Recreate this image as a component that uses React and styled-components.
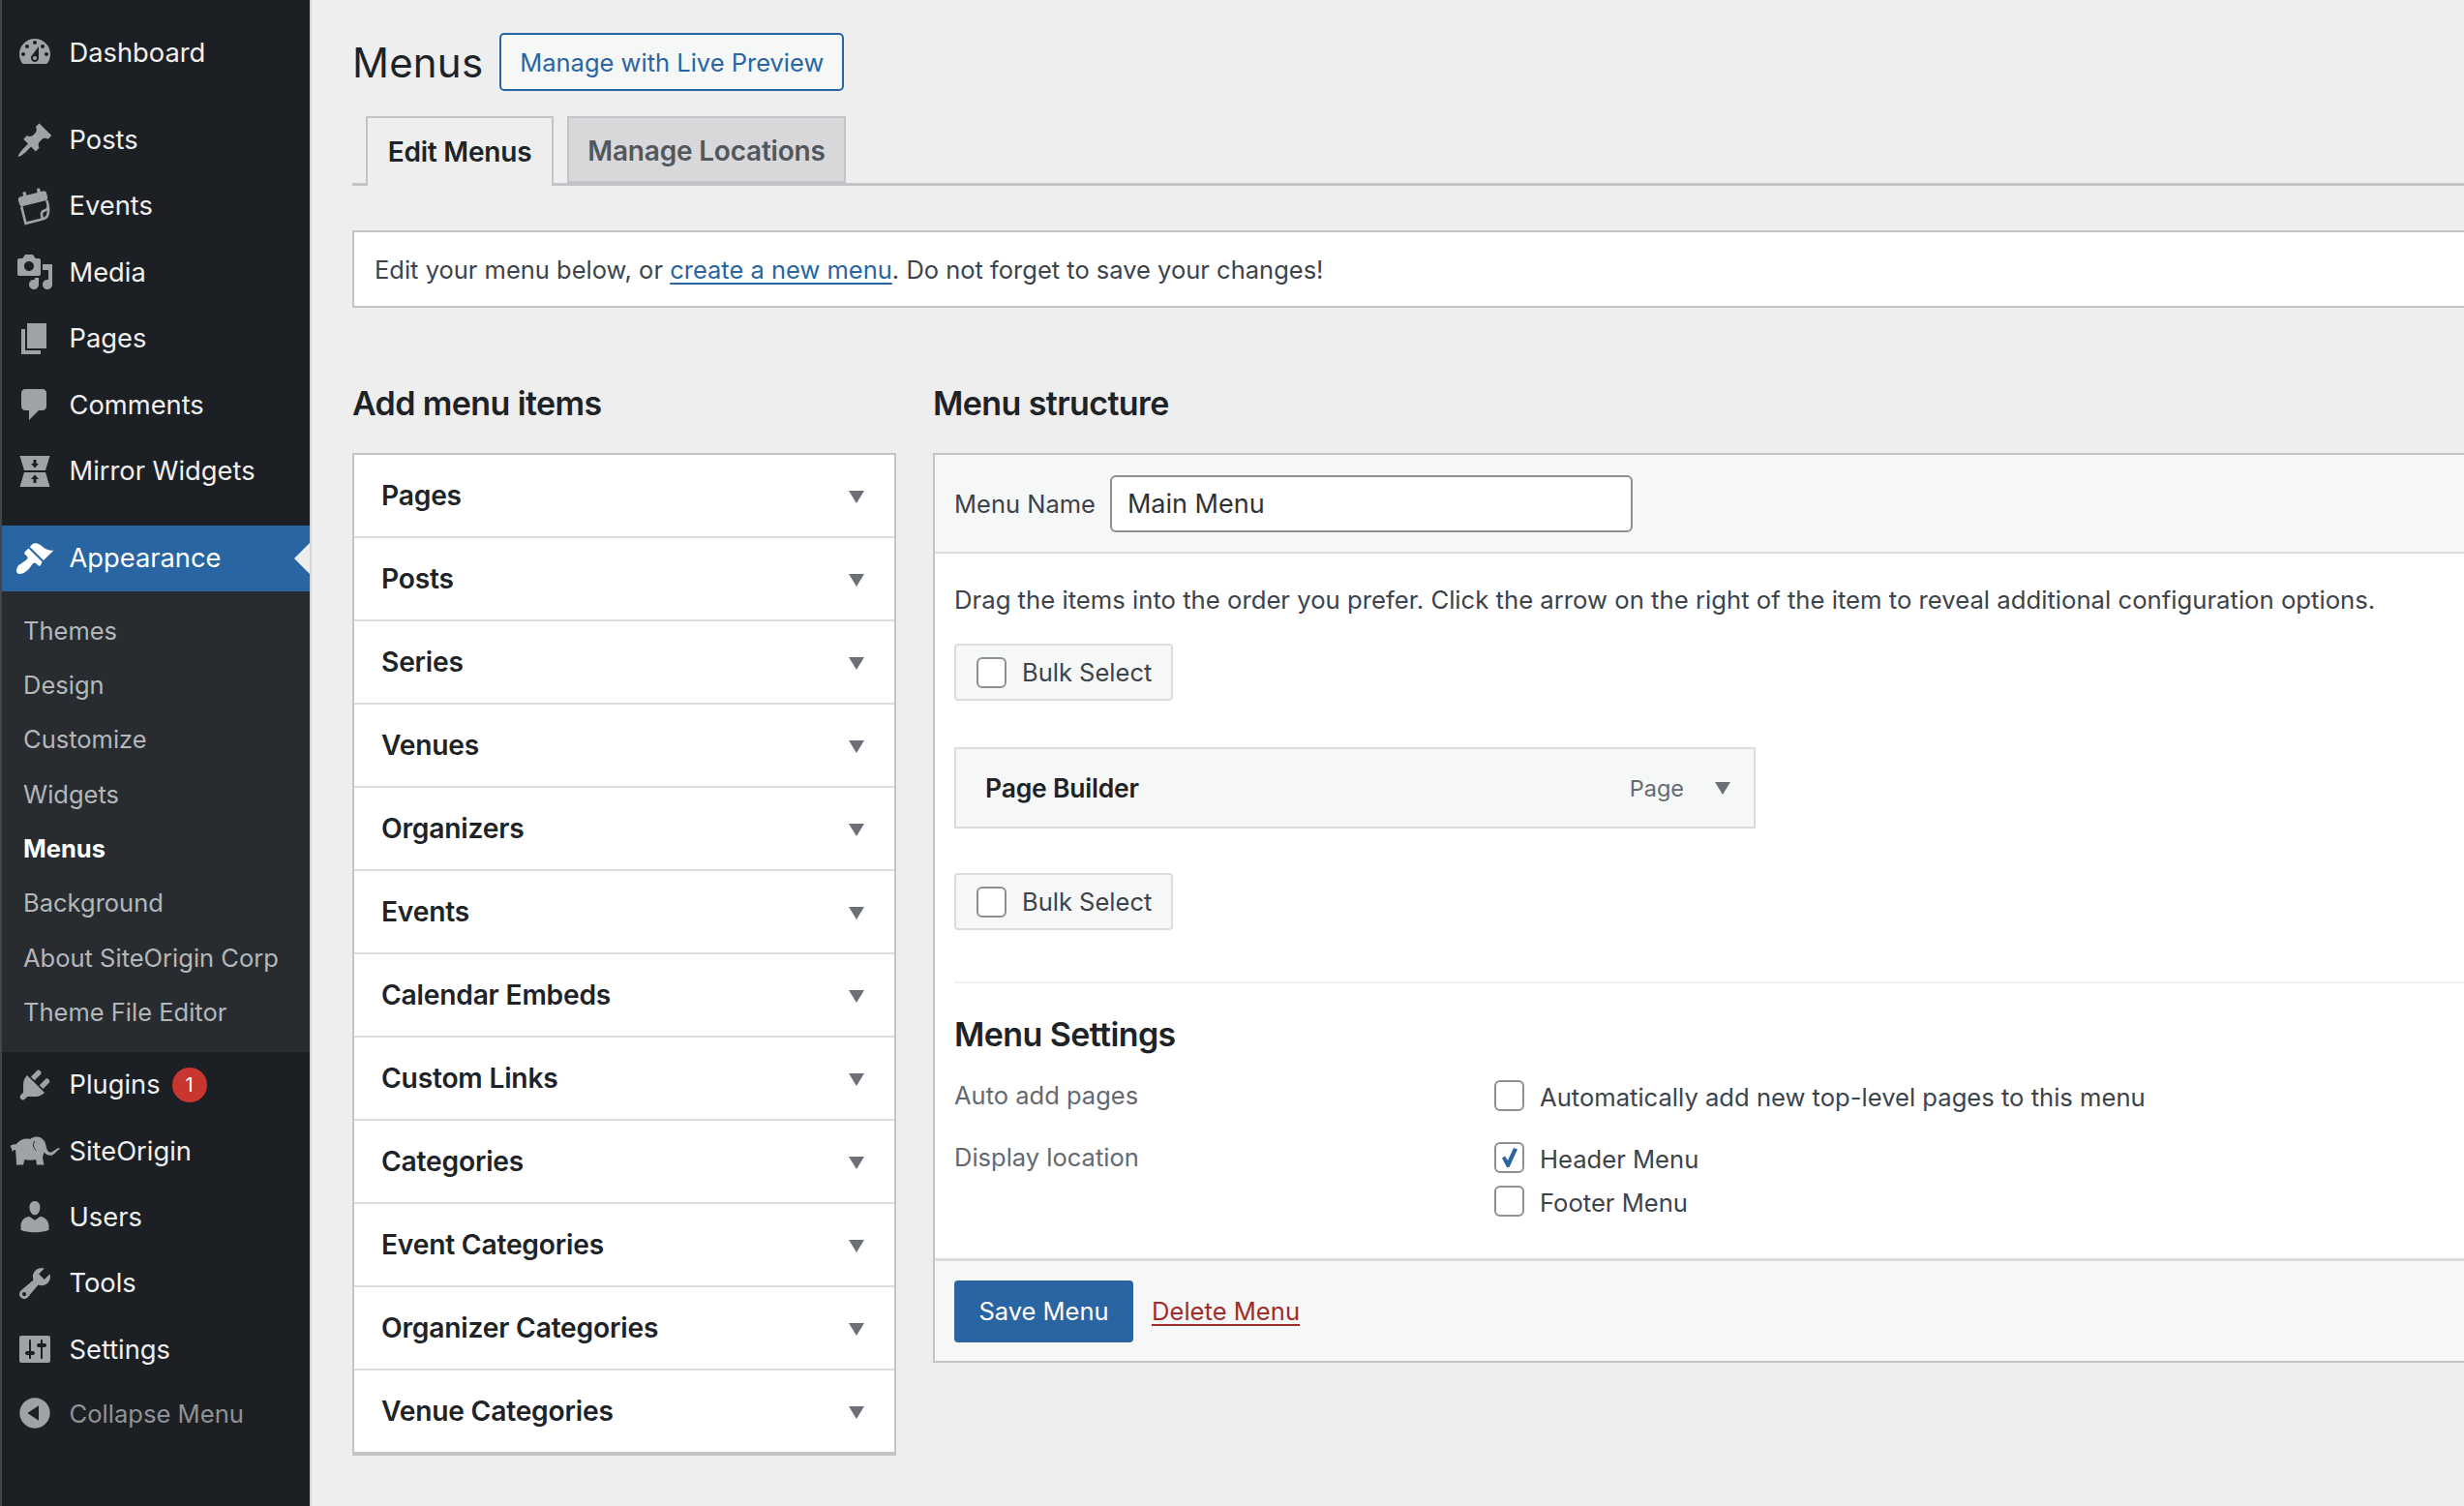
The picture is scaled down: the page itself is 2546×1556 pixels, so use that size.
import React from 'react';
import styled, { createGlobalStyle } from 'styled-components';

const GlobalStyle = createGlobalStyle`
  html, body {
    margin: 0;
    padding: 0;
    background: #eeeeef;
  }
  body {
    width: 2546px;
    height: 1556px;
    overflow: hidden;
    font-family: Inter, "Liberation Sans", sans-serif;
    color: #3c434a;
  }
  * {
    box-sizing: border-box;
  }
`;

const Page = styled.div`
  display: flex;
  width: 2546px;
  height: 1556px;
  overflow: hidden;
`;

/* ---------- sidebar ---------- */

const Sidebar = styled.nav`
  flex: 0 0 322px;
  height: 100%;
  padding-top: 20px;
  background: #1c2024;
  border-left: 2px solid #43474b;
  border-right: 2px solid #d4d5d6;
`;

const MenuRow = styled.div`
  position: relative;
  display: flex;
  align-items: center;
  height: ${props => (props.$last ? '64px' : '68.4px')};
  margin-top: ${props => props.$gap || 0}px;
  padding-left: 14px;
  background: ${props => (props.$active ? '#2a65a3' : 'transparent')};
  color: ${props => (props.$muted ? '#8f9398' : props.$active ? '#ffffff' : '#f0f0f1')};
  font-size: ${props => (props.$muted ? '25.6px' : '27.3px')};

  &::after {
    content: ${props => (props.$active ? '""' : 'none')};
    position: absolute;
    right: 0;
    top: 50%;
    margin-top: -16px;
    border-style: solid;
    border-width: 16px 16px 16px 0;
    border-color: transparent #eeeeef transparent transparent;
  }
`;

const IconBox = styled.span`
  display: flex;
  align-items: center;
  justify-content: center;
  flex: 0 0 40px;
  width: 40px;
  height: 40px;
  margin-right: 15.5px;
  color: ${props => (props.$active ? '#ffffff' : '#9ea3a8')};

  svg {
    display: block;
    flex-shrink: 0;
    fill: currentColor;
  }
`;

const Badge = styled.span`
  display: flex;
  align-items: center;
  justify-content: center;
  width: 36px;
  height: 36px;
  margin-left: 12px;
  border-radius: 50%;
  background: #c9352f;
  color: #fff;
  font-size: 20px;
`;

const SubMenu = styled.div`
  padding: 12px 0 13px;
  background: #282c30;
`;

const SubItem = styled.div`
  display: flex;
  align-items: center;
  height: 56.3px;
  padding-left: 22px;
  font-size: 25.5px;
  font-weight: ${props => (props.$current ? 700 : 400)};
  color: ${props => (props.$current ? '#ffffff' : '#b4b7ba')};
`;

/* ---------- main ---------- */

const Main = styled.main`
  flex: 1;
  min-width: 0;
  padding-left: 42px;
`;

const TitleRow = styled.div`
  display: flex;
  align-items: center;
  height: 60px;
  margin-top: 34px;
`;

const Title = styled.h1`
  margin: 0 17px 0 0;
  font-size: 42px;
  font-weight: 400;
  letter-spacing: 0.2px;
  color: #1d2327;
`;

const OutlineButton = styled.a`
  display: flex;
  align-items: center;
  justify-content: center;
  width: 356px;
  height: 60px;
  border: 2px solid #2a65a3;
  border-radius: 5px;
  background: #f6f7f7;
  color: #2a65a3;
  font-size: 25.5px;
`;

const TabBar = styled.div`
  display: flex;
  gap: 14px;
  height: 72px;
  margin-top: 26px;
  padding-left: 14px;
  border-bottom: 3px solid #c3c4c7;
`;

const Tab = styled.div`
  display: flex;
  align-items: center;
  justify-content: center;
  width: ${props => props.$width}px;
  height: ${props => (props.$active ? 72 : 69)}px;
  padding-top: ${props => (props.$active ? 0 : 3)}px;
  border: 2px solid #c3c4c7;
  border-bottom: ${props => (props.$active ? 'none' : '2px solid #c3c4c7')};
  background: ${props => (props.$active ? '#eeeeef' : '#d8d8da')};
  color: ${props => (props.$active ? '#1d2327' : '#50575e')};
  font-size: 28px;
  font-weight: 600;
  letter-spacing: -0.2px;
`;

const Notice = styled.div`
  display: flex;
  align-items: center;
  height: 80px;
  margin-top: 46px;
  padding-left: 21px;
  border: 2px solid #c3c4c7;
  border-right: none;
  background: #fff;
  font-size: 25.5px;
  color: #3c434a;
`;

const TextLink = styled.a`
  color: ${props => props.$color || '#2a65a3'};
  text-decoration: underline;
  text-underline-offset: 4px;
`;

const Columns = styled.div`
  display: flex;
  gap: 38px;
  margin-top: 79px;
`;

const LeftColumn = styled.section`
  flex: 0 0 562px;
`;

const RightColumn = styled.section`
  flex: 1;
  min-width: 0;
`;

const ColumnTitle = styled.h2`
  height: 40px;
  margin: 0 0 31px;
  font-size: 34px;
  line-height: 40px;
  font-weight: 600;
  letter-spacing: -0.6px;
  color: #1d2327;
`;

const Accordion = styled.div`
  border: 2px solid #c3c4c7;
  border-bottom-width: 4px;
  background: #fff;
`;

const AccordionRow = styled.div`
  display: flex;
  align-items: center;
  justify-content: space-between;
  height: ${props => (props.$first ? 84 : 86)}px;
  padding: 0 31px 0 28px;
  border-top: ${props => (props.$first ? 'none' : '2px solid #dcdcde')};
  font-size: 28.2px;
  font-weight: 600;
  letter-spacing: -0.2px;
  color: #1d2327;
`;

const Arrow = styled.span`
  width: 0;
  height: 0;
  margin-top: ${props => props.$mt || 0}px;
  border-style: solid;
  border-width: 13px 8px 0;
  border-color: #6c7076 transparent transparent;
`;

const Panel = styled.div`
  border: 2px solid #c3c4c7;
  border-right: none;
  background: #fff;
`;

const PanelHeader = styled.div`
  display: flex;
  align-items: center;
  height: 102px;
  padding-left: 20px;
  border-bottom: 2px solid #dcdcde;
  background: #f6f7f7;
  font-size: 25.5px;
`;

const NameInput = styled.div`
  display: flex;
  align-items: center;
  width: 540px;
  height: 59px;
  margin-left: 15px;
  padding-left: 16px;
  border: 2px solid #8c8f94;
  border-radius: 6px;
  background: #fff;
  color: #2c3338;
  font-size: 27px;
`;

const PanelBody = styled.div`
  padding: 32px 0 43px 20px;
`;

const HelpText = styled.p`
  margin: 0 0 29px;
  font-size: 25.7px;
  line-height: 32px;
  color: #3c434a;
  white-space: nowrap;
`;

const BulkBox = styled.div`
  display: flex;
  align-items: center;
  width: 226px;
  height: 59px;
  margin-top: ${props => props.$mt || 0}px;
  padding-left: 21px;
  border: 2px solid #dcdcde;
  border-radius: 4px;
  background: #f6f7f7;
  font-size: 25.5px;
`;

const CheckBox = styled.span`
  display: flex;
  align-items: center;
  justify-content: center;
  flex: 0 0 31px;
  width: 31px;
  height: 32px;
  margin-right: 16px;
  border: 2px solid #8c8f94;
  border-radius: 6px;
  background: #fff;
`;

const MenuItem = styled.div`
  display: flex;
  align-items: center;
  width: 828px;
  height: 84px;
  margin-top: 48px;
  padding: 0 24px 0 30px;
  border: 2px solid #dcdcde;
  background: #f6f7f7;
`;

const ItemTitle = styled.span`
  flex: 1;
  font-size: 26.5px;
  font-weight: 600;
  letter-spacing: -0.2px;
  color: #1d2327;
`;

const ItemType = styled.span`
  margin-right: 32px;
  font-size: 23.5px;
  color: #646970;
`;

const Divider = styled.div`
  height: 2px;
  margin-top: 53px;
  background: #f0f0f1;
`;

const SettingsTitle = styled.h3`
  height: 40px;
  margin: 33px 0 0;
  font-size: 34px;
  line-height: 40px;
  font-weight: 600;
  letter-spacing: -0.6px;
  color: #1d2327;
`;

const SettingRow = styled.div`
  display: grid;
  grid-template-columns: 558px 1fr;
  margin-top: ${props => props.$mt}px;
`;

const SettingLabel = styled.div`
  font-size: 25.5px;
  line-height: 32px;
  color: #646970;
`;

const Options = styled.div`
  display: flex;
  flex-direction: column;
  gap: 13px;
`;

const Option = styled.label`
  display: flex;
  align-items: center;
  height: 32px;
  font-size: 25.6px;
  color: #3c434a;
  white-space: nowrap;

  span:last-child {
    position: relative;
    top: 1px;
  }
`;

const PanelFooter = styled.div`
  display: flex;
  align-items: center;
  height: 106px;
  padding: 0 0 0 20px;
  border-top: 3px solid #dcdcde;
  background: #f6f7f7;
  font-size: 25.6px;
`;

const SaveButton = styled.a`
  display: flex;
  align-items: center;
  justify-content: center;
  width: 185px;
  height: 64px;
  margin-right: 19px;
  border-radius: 4px;
  background: #2a65a3;
  color: #fff;
  font-size: 25.5px;
`;

/* ---------- icons ---------- */

const Dash = ({ d }) => (
  <svg width="40" height="40" viewBox="0 0 20 20">
    <path d={d} />
  </svg>
);

const EventsIcon = () => (
  <svg width="38" height="42" viewBox="0 0 38 42">
    <g transform="rotate(-14 19 21)">
      <rect x="4" y="8" width="30" height="10" rx="3" />
      <rect x="10" y="4" width="3.4" height="6" rx="1" />
      <rect x="25" y="4" width="3.4" height="6" rx="1" />
      <path
        d="M5.5 18V36H24C29 36 33 31 32.5 18M24 36C22.5 32 24 28 27 28C29.5 28 31.5 27 32.5 24"
        fill="none"
        stroke="currentColor"
        strokeWidth="2.6"
      />
    </g>
  </svg>
);

const MirrorIcon = () => (
  <svg width="32" height="32" viewBox="0 0 32 32">
    <path d="M0.5 0H31.5L27 15H5ZM5 17H27L31.5 32H0.5Z" />
    <path d="M14.5 4H17.5V8H20L16 12.5L12 8H14.5ZM14.5 28H17.5V24H20L16 19.5L12 24H14.5Z" fill="#1c2024" />
  </svg>
);

const ElephantIcon = () => (
  <svg width="52" height="30" viewBox="0 0 52 30">
    <path d="M0.5 10C2.5 8 5 8.5 7 8C10 3.5 16 1.5 21 3C24 0 31 -0.5 34 3C37 5.5 37.5 9 38 12C39 15.5 41 17.5 44 16C46.5 15 47.5 12.5 51.5 12L51.5 13.5C48.5 14.5 47.5 18 44 19.5C40.5 20.5 37 18.5 35.5 16.5L34 22L35.5 29.5H28L27 24C23 25 18.5 25 15.5 24L14 29.5H7C7 25 6.5 20 6 14C4.5 13.5 3 15 2.5 16C2.5 14 2 12 0.5 10Z" />
    <path d="M26 5C23.5 8 24 12 27.5 14.5" fill="none" stroke="#1c2024" strokeWidth="1" />
  </svg>
);

const paths = {
  dashboard:
    'M3.76 16h12.48c1.1-1.37 1.76-3.11 1.76-5 0-4.42-3.58-8-8-8s-8 3.58-8 8c0 1.89.66 3.63 1.76 5zM10 4c.55 0 1 .45 1 1s-.45 1-1 1-1-.45-1-1 .45-1 1-1zM6 6c.55 0 1 .45 1 1s-.45 1-1 1-1-.45-1-1 .45-1 1-1zm8 0c.55 0 1 .45 1 1s-.45 1-1 1-1-.45-1-1 .45-1 1-1zm-5.37 5.55L12 7v6c0 1.1-.9 2-2 2s-2-.9-2-2c0-.57.24-1.08.63-1.45zM4 10c.55 0 1 .45 1 1s-.45 1-1 1-1-.45-1-1 .45-1 1-1zm12 0c.55 0 1 .45 1 1s-.45 1-1 1-1-.45-1-1 .45-1 1-1zm-5 3c0-.55-.45-1-1-1s-1 .45-1 1 .45 1 1 1 1-.45 1-1z',
  post:
    'M10.44 3.02l1.82-1.82 6.36 6.35-1.83 1.82c-1.05-.68-2.48-.57-3.41.36l-.75.75c-.92.93-1.04 2.35-.35 3.41l-1.83 1.82-2.41-2.41-2.8 2.79c-.42.42-3.38 2.71-3.8 2.29s1.86-3.39 2.28-3.81l2.79-2.79L4.1 9.36l1.83-1.82c1.05.69 2.48.57 3.4-.36l.75-.75c.93-.92 1.05-2.35.36-3.41z',
  media:
    'M13 11V4c0-.55-.45-1-1-1h-1.67L9 1H5L3.67 3H2c-.55 0-1 .45-1 1v7c0 .55.45 1 1 1h10c.55 0 1-.45 1-1zM7 4.5c1.38 0 2.5 1.12 2.5 2.5S8.38 9.5 7 9.5 4.5 8.38 4.5 7 5.62 4.5 7 4.5zM14 6h5v10.5c0 1.38-1.12 2.5-2.5 2.5S14 17.88 14 16.5s1.12-2.5 2.5-2.5c.17 0 .34.02.5.05V9h-3V6zm-4 8.05V13h2v3.5c0 1.38-1.12 2.5-2.5 2.5S7 17.88 7 16.5 8.12 14 9.5 14c.17 0 .34.02.5.05z',
  page: 'M6 15V2h10v13H6zm-1 1h8v2H3V5h2v11z',
  comments:
    'M5 2h9c1.1 0 2 .9 2 2v7c0 1.1-.9 2-2 2h-2l-5 5v-5H5c-1.1 0-2-.9-2-2V4c0-1.1.9-2 2-2z',
  appearance:
    'M14.48 11.06L7.41 3.99l1.5-1.5c.5-.56 2.3-.47 3.51.32 1.21.8 1.43 1.28 2.91 2.1 1.18.64 2.45 1.26 4.45.85zm-.71.71L6.7 4.7 4.93 6.47c-.39.39-.39 1.02 0 1.41l1.06 1.06c.39.39.39 1.03 0 1.42-.6.6-1.43 1.11-2.21 1.69-.35.26-.7.53-1.01.84C1.43 13.23.5 14.81.5 16.5c0 .63.53 1.5 1.5 1.5 1.69 0 3.27-.93 4.61-2.28.31-.31.58-.66.84-1.01.58-.78 1.09-1.61 1.69-2.21.39-.39 1.03-.39 1.42 0l1.06 1.06c.39.39 1.02.39 1.41 0z',
  plugins:
    'M13.11 4.36L9.87 7.6 8 5.73l3.24-3.24c.35-.34 1.05-.2 1.56.32.52.51.66 1.21.31 1.55zm-8 1.77l.91-1.12 9.01 9.01-1.19.84c-.71.71-2.63 1.16-3.82 1.16H6.14L4.9 17.26c-.59.59-1.54.59-2.12 0-.59-.58-.59-1.53 0-2.12l1.24-1.24v-3.88c0-1.13.4-3.19 1.09-3.89zm7.26 3.97l3.24-3.24c.34-.35 1.04-.21 1.55.31.52.51.66 1.21.31 1.55l-3.24 3.25z',
  users:
    'M10 9.25c-2.27 0-2.73-3.44-2.73-3.44C7 4.02 7.82 2 9.97 2c2.16 0 2.98 2.02 2.71 3.81 0 0-.41 3.44-2.68 3.44zm0 2.57L12.72 10c2.39 0 4.52 2.33 4.52 4.53v2.49s-3.65 1.13-7.24 1.13c-3.65 0-7.24-1.13-7.24-1.13v-2.49c0-2.25 1.94-4.48 4.47-4.48z',
  tools:
    'M16.68 9.77c-1.34 1.34-3.3 1.67-4.95.99l-5.41 6.52c-.99.99-2.59.99-3.58 0s-.99-2.59 0-3.57l6.52-5.42c-.68-1.65-.35-3.61.99-4.95 1.28-1.28 3.12-1.62 4.72-1.06l-2.89 2.89 2.82 2.82 2.86-2.87c.53 1.58.18 3.39-1.08 4.65zM3.81 16.21c.4.39 1.04.39 1.43 0 .4-.4.4-1.04 0-1.43-.39-.4-1.03-.4-1.43 0-.39.39-.39 1.03 0 1.43z',
  settings:
    'M18 16V4c0-.55-.45-1-1-1H3c-.55 0-1 .45-1 1v12c0 .55.45 1 1 1h14c.55 0 1-.45 1-1zM8 11h1c.55 0 1 .45 1 1s-.45 1-1 1H8v1.5c0 .28-.22.5-.5.5s-.5-.22-.5-.5V13H6c-.55 0-1-.45-1-1s.45-1 1-1h1V5.5c0-.28.22-.5.5-.5s.5.22.5.5V11zm5-2h-1c-.55 0-1-.45-1-1s.45-1 1-1h1V5.5c0-.28.22-.5.5-.5s.5.22.5.5V7h1c.55 0 1 .45 1 1s-.45 1-1 1h-1v5.5c0 .28-.22.5-.5.5s-.5-.22-.5-.5V9z',
  collapse:
    'M10 2.16c4.33 0 7.84 3.51 7.84 7.84s-3.51 7.84-7.84 7.84S2.16 14.33 2.16 10 5.71 2.16 10 2.16zm2 11.72V6.12L6.18 9.97z',
};

const Tick = () => (
  <svg width="19" height="22" viewBox="0 0 19 22">
    <path d="M2 11.5L5 9.5L8 14L14 1L18 2.5L9.5 21H7Z" fill="#2a65a3" />
  </svg>
);

const subItems = ['Themes', 'Design', 'Customize', 'Widgets', 'Menus', 'Background', 'About SiteOrigin Corp', 'Theme File Editor'];

const accordionItems = [
  'Pages',
  'Posts',
  'Series',
  'Venues',
  'Organizers',
  'Events',
  'Calendar Embeds',
  'Custom Links',
  'Categories',
  'Event Categories',
  'Organizer Categories',
  'Venue Categories',
];

const App = () => {
  return (
    <Page>
      <GlobalStyle />
      <Sidebar>
        <MenuRow>
          <IconBox><Dash d={paths.dashboard} /></IconBox>
          Dashboard
        </MenuRow>
        <MenuRow $gap={22}>
          <IconBox><Dash d={paths.post} /></IconBox>
          Posts
        </MenuRow>
        <MenuRow>
          <IconBox><EventsIcon /></IconBox>
          Events
        </MenuRow>
        <MenuRow>
          <IconBox><Dash d={paths.media} /></IconBox>
          Media
        </MenuRow>
        <MenuRow>
          <IconBox><Dash d={paths.page} /></IconBox>
          Pages
        </MenuRow>
        <MenuRow>
          <IconBox><Dash d={paths.comments} /></IconBox>
          Comments
        </MenuRow>
        <MenuRow>
          <IconBox><MirrorIcon /></IconBox>
          Mirror Widgets
        </MenuRow>
        <MenuRow $gap={22} $active>
          <IconBox $active><Dash d={paths.appearance} /></IconBox>
          Appearance
        </MenuRow>
        <SubMenu>
          {subItems.map(item => (
            <SubItem key={item} $current={item === 'Menus'}>{item}</SubItem>
          ))}
        </SubMenu>
        <MenuRow>
          <IconBox><Dash d={paths.plugins} /></IconBox>
          Plugins
          <Badge>1</Badge>
        </MenuRow>
        <MenuRow>
          <IconBox><ElephantIcon /></IconBox>
          SiteOrigin
        </MenuRow>
        <MenuRow>
          <IconBox><Dash d={paths.users} /></IconBox>
          Users
        </MenuRow>
        <MenuRow>
          <IconBox><Dash d={paths.tools} /></IconBox>
          Tools
        </MenuRow>
        <MenuRow>
          <IconBox><Dash d={paths.settings} /></IconBox>
          Settings
        </MenuRow>
        <MenuRow $muted $last>
          <IconBox><Dash d={paths.collapse} /></IconBox>
          Collapse Menu
        </MenuRow>
      </Sidebar>

      <Main>
        <TitleRow>
          <Title>Menus</Title>
          <OutlineButton>Manage with Live Preview</OutlineButton>
        </TitleRow>

        <TabBar>
          <Tab $active $width={194}>Edit Menus</Tab>
          <Tab $width={288}>Manage Locations</Tab>
        </TabBar>

        <Notice>
          <span>
            Edit your menu below, or <TextLink>create a new menu</TextLink>. Do not forget to save your changes!
          </span>
        </Notice>

        <Columns>
          <LeftColumn>
            <ColumnTitle>Add menu items</ColumnTitle>
            <Accordion>
              {accordionItems.map((item, i) => (
                <AccordionRow key={item} $first={i === 0}>
                  {item}
                  <Arrow $mt={2} />
                </AccordionRow>
              ))}
            </Accordion>
          </LeftColumn>

          <RightColumn>
            <ColumnTitle>Menu structure</ColumnTitle>
            <Panel>
              <PanelHeader>
                Menu Name
                <NameInput>Main Menu</NameInput>
              </PanelHeader>
              <PanelBody>
                <HelpText>
                  Drag the items into the order you prefer. Click the arrow on the right of the item to reveal additional configuration options.
                </HelpText>
                <BulkBox>
                  <CheckBox />
                  Bulk Select
                </BulkBox>
                <MenuItem>
                  <ItemTitle>Page Builder</ItemTitle>
                  <ItemType>Page</ItemType>
                  <Arrow />
                </MenuItem>
                <BulkBox $mt={46}>
                  <CheckBox />
                  Bulk Select
                </BulkBox>
                <Divider />
                <SettingsTitle>Menu Settings</SettingsTitle>
                <SettingRow $mt={27}>
                  <SettingLabel>Auto add pages</SettingLabel>
                  <Options>
                    <Option>
                      <CheckBox />
                      <span>Automatically add new top-level pages to this menu</span>
                    </Option>
                  </Options>
                </SettingRow>
                <SettingRow $mt={32}>
                  <SettingLabel>Display location</SettingLabel>
                  <Options>
                    <Option>
                      <CheckBox><Tick /></CheckBox>
                      <span>Header Menu</span>
                    </Option>
                    <Option>
                      <CheckBox />
                      <span>Footer Menu</span>
                    </Option>
                  </Options>
                </SettingRow>
              </PanelBody>
              <PanelFooter>
                <SaveButton>Save Menu</SaveButton>
                <TextLink $color="#a02c2c">Delete Menu</TextLink>
              </PanelFooter>
            </Panel>
          </RightColumn>
        </Columns>
      </Main>
    </Page>
  );
};

export default App;
